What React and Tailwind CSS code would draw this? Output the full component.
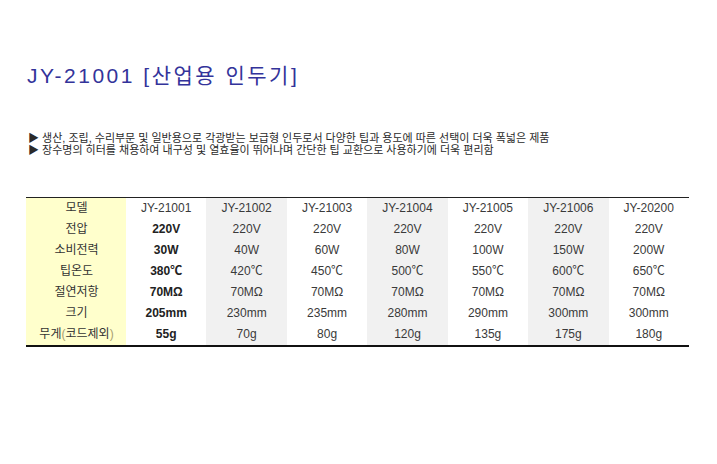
const cols = [
  { bg: "bg-white", bold: true, v: ["JY-21001", "220V", "30W", "380℃", "70MΩ", "205mm", "55g"] },
  { bg: "bg-[#f1f1f1]", v: ["JY-21002", "220V", "40W", "420℃", "70MΩ", "230mm", "70g"] },
  { bg: "bg-white", v: ["JY-21003", "220V", "60W", "450℃", "70MΩ", "235mm", "80g"] },
  { bg: "bg-[#f1f1f1]", v: ["JY-21004", "220V", "80W", "500℃", "70MΩ", "280mm", "120g"] },
  { bg: "bg-white", v: ["JY-21005", "220V", "100W", "550℃", "70MΩ", "290mm", "135g"] },
  { bg: "bg-[#f1f1f1]", v: ["JY-21006", "220V", "150W", "600℃", "70MΩ", "300mm", "175g"] },
  { bg: "bg-white", v: ["JY-20200", "220V", "200W", "650℃", "70MΩ", "300mm", "180g"] },
];

const labels = ["모델", "전압", "소비전력", "팁온도", "절연저항", "크기"];

export default function App() {
  return (
    <div
      className="w-[717px] h-[464px] bg-white pt-[63px] pl-[27px]"
      style={{ fontFamily: '"Liberation Sans", "Noto Sans CJK KR", sans-serif' }}
    >
      <h1 className="text-[21px] leading-[26px] tracking-[2.5px] text-[#33339a]">
        JY-21001 [산업용 인두기]
      </h1>
      <div className="mt-[43px] ml-[1px] text-[11px] leading-[12px] text-[#2a2a2a]">
        <p>▶ 생산, 조립, 수리부문 및 일반용으로 각광받는 보급형 인두로서 다양한 팁과 용도에 따른 선택이 더욱 폭넓은 제품</p>
        <p>▶ 장수명의 히터를 채용하여 내구성 및 열효율이 뛰어나며 간단한 팁 교환으로 사용하기에 더욱 편리함</p>
      </div>
      <div className="mt-[41px] -ml-[1px] w-[663px] border-t border-[#222] border-b-2 border-b-[#111] flex text-[12px] leading-[21px] text-[#3a3a3a]">
        <div className="w-[100px] pl-[1px] bg-[#ffffcc] flex flex-col items-center text-[#333]">
          {labels.map((l) => (
            <div key={l} className="h-[21px]">{l}</div>
          ))}
          <div className="h-[21px]">
            무게<span className="text-[#a8a070]">(</span>코드제외<span className="text-[#a8a070]">)</span>
          </div>
        </div>
        {cols.map((c, i) => (
          <div key={i} className={`flex-1 flex flex-col items-center ${c.bg}`}>
            {c.v.map((v, j) => (
              <div
                key={j}
                className={`h-[21px] ${c.bold && j > 0 ? "font-bold text-[#222]" : ""}`}
              >
                {v}
              </div>
            ))}
          </div>
        ))}
      </div>
    </div>
  );
}
